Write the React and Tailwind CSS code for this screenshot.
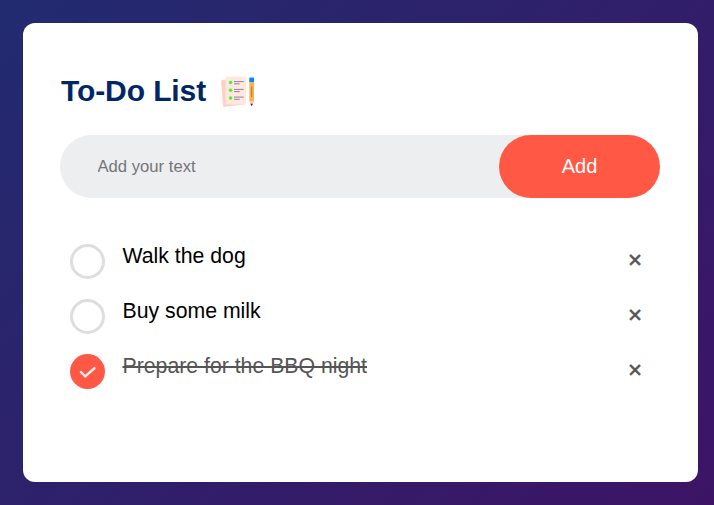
const tasks = [
  { text: "Walk the dog", done: false },
  { text: "Buy some milk", done: false },
  { text: "Prepare for the BBQ night", done: true },
];

function NotesIcon() {
  return (
    <svg viewBox="0 0 38 38" className="size-[38px]" aria-hidden="true">
      <path d="M3.2 8 L24 6.5 L27 32.5 L6.5 34.8 Q5.1 34.9 5 33.5 L3.1 10 Q3 8 4.3 8Z" fill="#ffd0c4" />
      <rect x="7.5" y="4.6" width="20.5" height="28" rx="1.8" fill="#ffe9df" />
      <g fill="#4df23a">
        <circle cx="12.6" cy="10.5" r="1.8" />
        <circle cx="12.6" cy="18.3" r="1.8" />
        <circle cx="12.6" cy="26" r="1.8" />
      </g>
      <g stroke="#8b7398" strokeWidth="0.9" strokeLinecap="round">
        <path d="M16.4 9.6H25.3M16.4 11.8H21.3M16.4 17.4H25.3M16.4 19.6H21.3M16.4 25.1H25.3M16.4 27.3H21.3" />
      </g>
      <path d="M31.3 9H36V29.5H31.3Z" fill="#ffb14f" />
      <path d="M33.7 14.5V25" stroke="#a8713a" strokeWidth="0.9" />
      <path d="M31.3 6.1Q31.3 5.5 31.9 5.5H35.4Q36 5.5 36 6.1V10H31.3Z" fill="#0088ff" />
      <path d="M31.3 29.3H36L34.7 32.3H32.6Z" fill="#ffc0c5" />
      <path d="M32.4 31.8H34.9L33.7 34.2Z" fill="#302d40" />
    </svg>
  );
}

function Marker({ done }) {
  if (!done) {
    return <span className="size-[35px] shrink-0 rounded-full border-[3px] border-[#dedede]" />;
  }
  return (
    <span className="size-[35px] shrink-0 rounded-full bg-[#ff5945]">
      <svg viewBox="0 0 35 35" className="size-full" fill="none" aria-hidden="true">
        <path d="M11 18.2L15.2 22.4L24.4 14.2" stroke="#ffebe8" strokeWidth="2.5" strokeLinecap="round" strokeLinejoin="miter" />
      </svg>
    </span>
  );
}

export default function App() {
  return (
    <div className="h-[505px] w-[714px] bg-linear-[135deg,#222b70,#3d1465] pt-[23px] pl-[23px] font-['Liberation_Sans',Arial,sans-serif]">
      <main className="h-[459px] w-[675px] rounded-xl bg-white pt-[49px] pl-[37px]">
        <h1 className="flex h-[38px] items-center pl-px text-[30px] font-bold text-[#002765]">
          <span className="w-[157px] pb-[2px] whitespace-nowrap tracking-[-0.1px]">To-Do List</span>
          <NotesIcon />
        </h1>
        <div className="mt-[25px] flex h-[63px] w-[600px] rounded-full bg-[#edeef0]">
          <input
            type="text"
            placeholder="Add your text"
            className="w-[439px] bg-transparent pt-[2px] pl-[37.5px] text-[16.67px] outline-none placeholder:text-[#757575]"
          />
          <button className="w-[161px] rounded-full bg-[#ff5945] pb-[2px] text-xl text-white">Add</button>
        </div>
        <ul className="mt-[46px] flex w-[600px] flex-col gap-5 pl-[10px]">
          {tasks.map((task) => (
            <li key={task.text} className="flex h-[35px]">
              <Marker done={task.done} />
              <span
                className={`ml-[17.5px] flex-1 text-[21.25px] leading-6 ${
                  task.done ? "text-[#555] line-through decoration-2" : "text-black"
                }`}
              >
                {task.text}
              </span>
              <button className="flex w-[50px] items-center justify-center pb-[3px] text-[24px] leading-none text-[#555] [-webkit-text-stroke:0.6px_#555]">×</button>
            </li>
          ))}
        </ul>
      </main>
    </div>
  );
}
